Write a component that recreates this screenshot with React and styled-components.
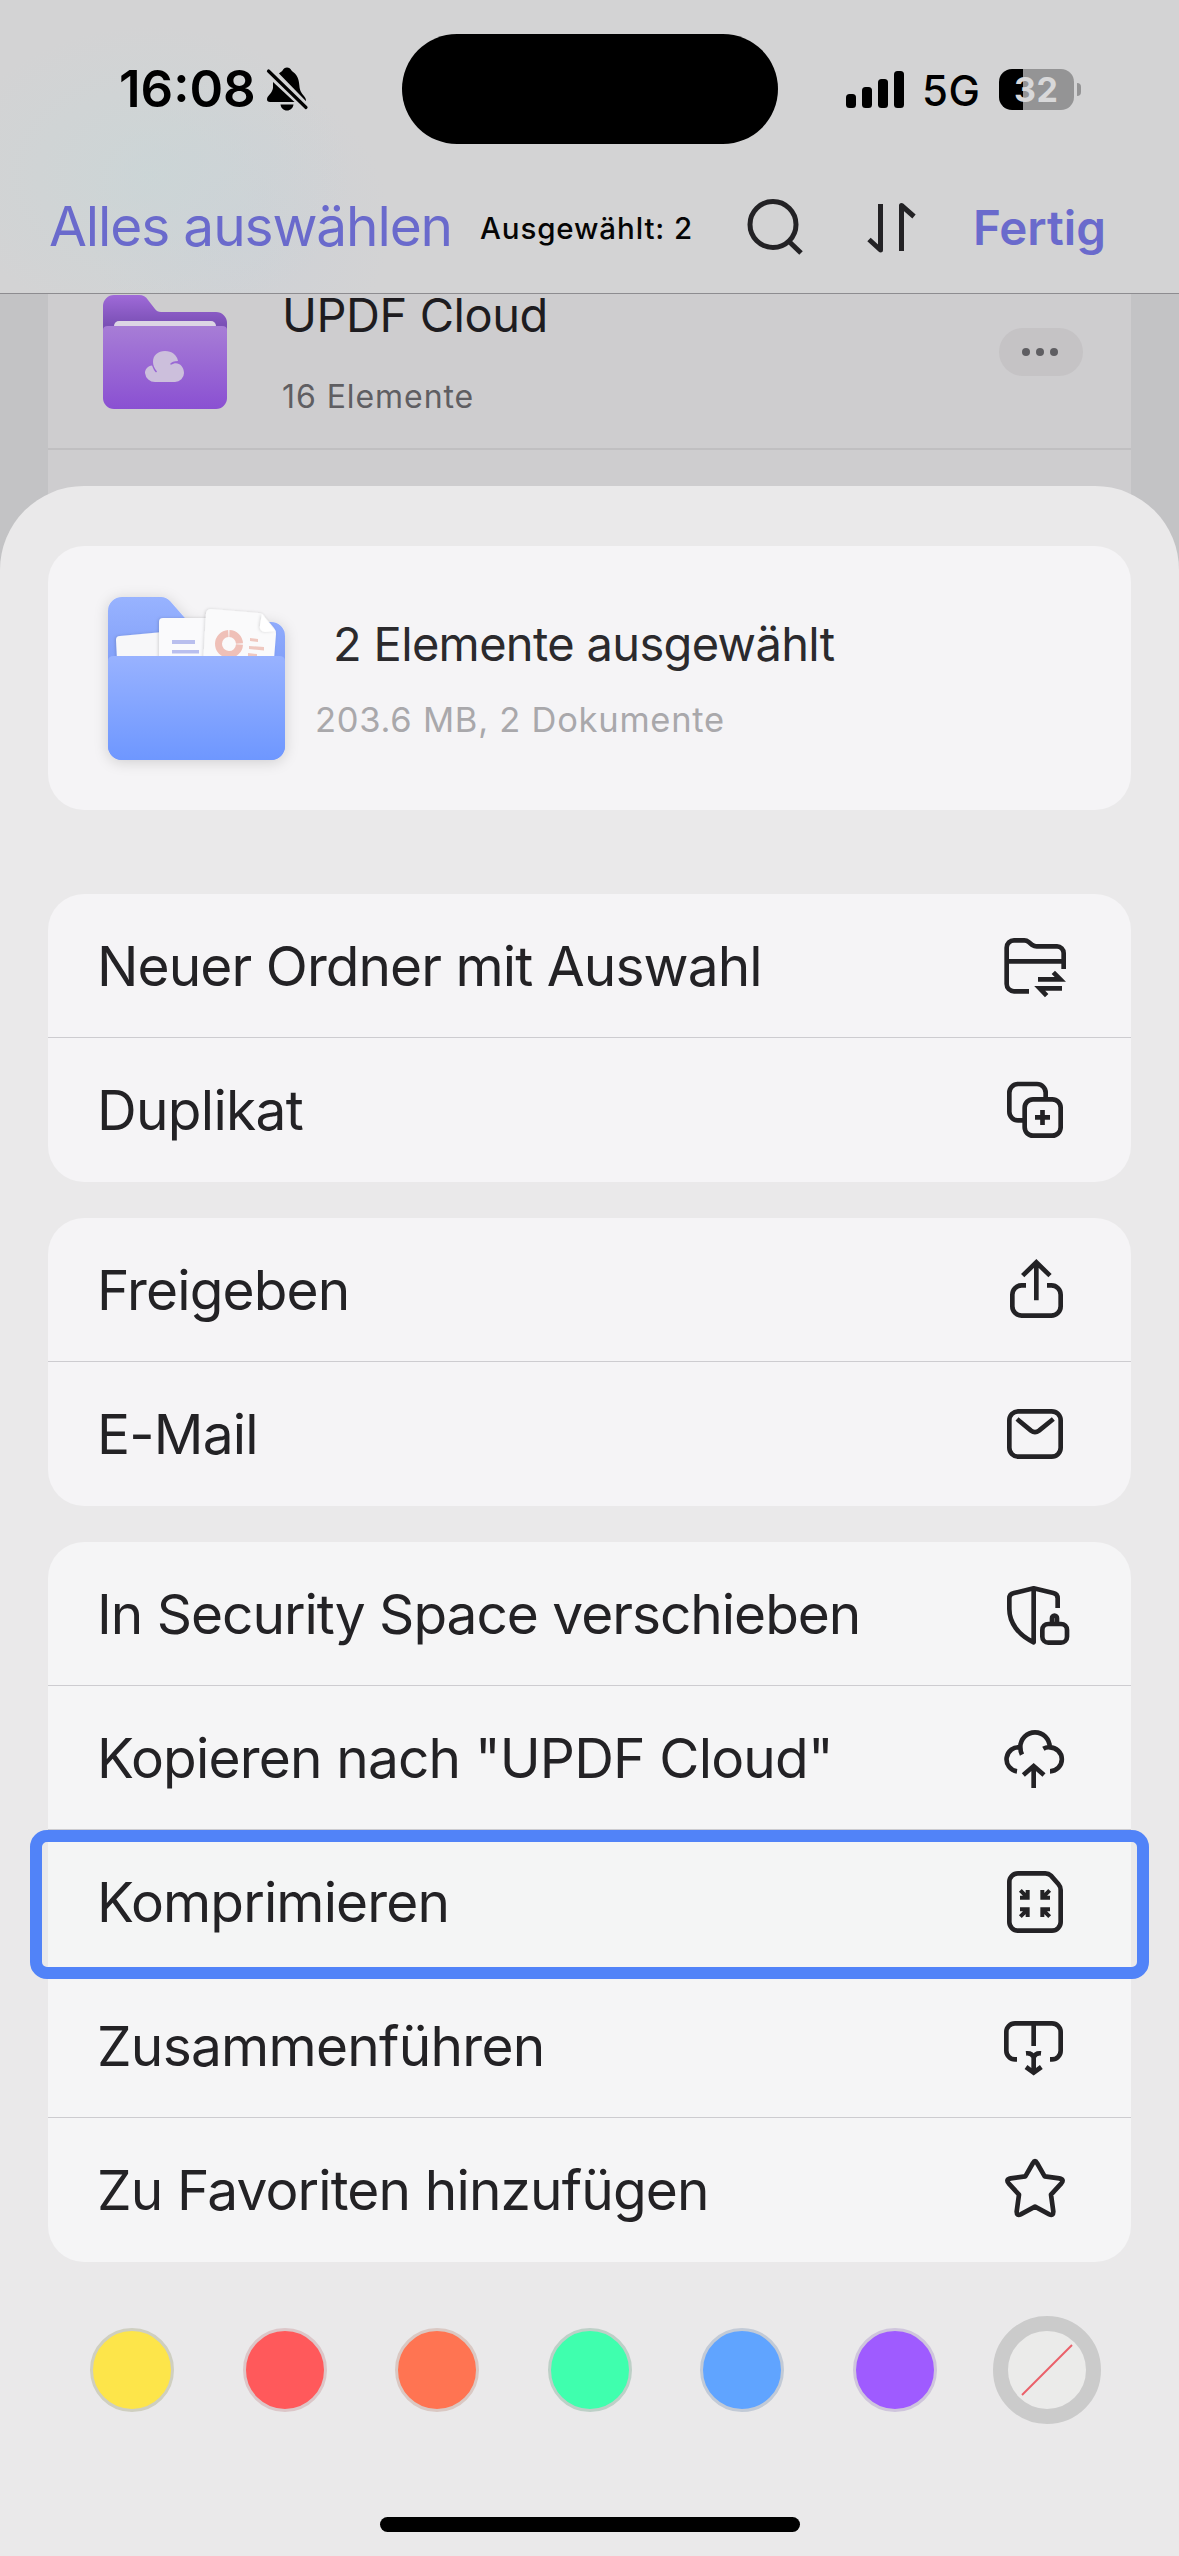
import React from "react";
import styled, { createGlobalStyle } from "styled-components";

const GlobalStyle = createGlobalStyle`
  * { box-sizing: border-box; }
  body { margin: 0; background: #c3c2c4; }
`;

const Screen = styled.div`
  width: 1179px;
  height: 2556px;
  display: flex;
  flex-direction: column;
  overflow: hidden;
  background: #c3c3c5;
  font-family: Inter, "Liberation Sans", sans-serif;
  color: #232225;
`;

const TopBar = styled.header`
  flex: none;
  height: 294px;
  border-bottom: 1px solid #8d8c90;
  background:
    radial-gradient(ellipse 200px 150px at 150px 175px, rgba(202, 214, 215, 0.75), rgba(202, 214, 215, 0)),
    radial-gradient(ellipse 150px 150px at 240px 225px, rgba(203, 208, 216, 0.6), rgba(203, 208, 216, 0)),
    #d3d3d4;
`;

const StatusBar = styled.div`
  height: 178px;
  display: grid;
  grid-template-columns: 402px 376px 401px;
  align-items: center;
  color: #000;
`;

const Clock = styled.div`
  display: flex;
  align-items: center;
  gap: 10px;
  padding-left: 119px;
  font-size: 51px;
  font-weight: 600;
  line-height: 60px;
`;

const Island = styled.div`
  height: 110px;
  border-radius: 55px;
  background: #000;
`;

const Indicators = styled.div`
  display: flex;
  align-items: center;
  padding-left: 68px;
`;

const SignalBars = styled.div`
  display: flex;
  align-items: flex-end;
  gap: 6px;
  height: 37px;
  margin-right: 18px;
`;

const SignalBar = styled.span`
  width: 10px;
  height: ${(p) => p.$height}px;
  border-radius: 3.5px;
  background: #000;
`;

const NetworkType = styled.span`
  width: 77px;
  padding-top: 3px;
  font-size: 42px;
  font-weight: 500;
  line-height: 50px;
  letter-spacing: 0.6px;
`;

const Battery = styled.div`
  display: flex;
  align-items: center;
  gap: 3px;
`;

const BatteryBody = styled.div`
  width: 75px;
  height: 41px;
  border-radius: 13px;
  background: linear-gradient(90deg, #000 24px, #949495 24px);
  color: #d8d8d9;
  font-size: 34px;
  font-weight: 700;
  line-height: 42px;
  letter-spacing: 0.6px;
  padding-left: 15px;
`;

const BatteryTip = styled.span`
  width: 4px;
  height: 13px;
  border-radius: 0 6px 6px 0;
  background: #949495;
`;

const NavBar = styled.nav`
  height: 115px;
  padding: 0 73px 20px 49px;
  display: flex;
  align-items: center;
`;

const NavLink = styled.span`
  color: #6a6acc;
  font-size: ${(p) => (p.$strong ? 47.5 : 55)}px;
  font-weight: ${(p) => (p.$strong ? 600 : 400)};
  letter-spacing: ${(p) => (p.$strong ? 0 : -1.13)}px;
  padding-top: ${(p) => (p.$strong ? 4 : 0)}px;
  line-height: 64px;
  white-space: nowrap;
`;

const SelectionCount = styled.span`
  margin-left: 28px;
  padding-top: 4px;
  color: #050505;
  font-size: 29.5px;
  font-weight: 500;
  line-height: 36px;
  letter-spacing: 0.89px;
  white-space: nowrap;
`;

const NavTools = styled.div`
  display: flex;
  gap: 52px;
  margin: 4px auto 0;
  padding-left: 4px;
`;

const Library = styled.main`
  flex: none;
  height: 280px;
  padding: 0 48px;
  overflow: hidden;
`;

const LibraryList = styled.div`
  height: 100%;
  background: #cecdcf;
`;

const LibraryRow = styled.div`
  height: 195px;
  margin-top: -39px;
  padding: 0 48px 0 55px;
  display: flex;
  align-items: center;
  border-bottom: 2px solid #c0bfc1;
`;

const LibraryItem = styled.div`
  flex: 1;
  padding: 16px 0 0 55px;
`;

const ItemName = styled.div`
  color: #1e1c20;
  font-size: 47px;
  line-height: 40px;
  letter-spacing: -0.45px;
`;

const ItemMeta = styled.div`
  margin-top: 34px;
  color: #5f5e62;
  font-size: 32px;
  line-height: 56px;
  letter-spacing: 0.93px;
`;

const MoreButton = styled.div`
  width: 84px;
  height: 48px;
  border-radius: 24px;
  display: flex;
  align-items: center;
  justify-content: center;
  gap: 6px;
  padding-right: 2px;
  background: #c5c3c5;
`;

const Dot = styled.span`
  width: 8px;
  height: 8px;
  border-radius: 50%;
  background: #5f5e62;
`;

const Sheet = styled.section`
  position: relative;
  flex: 1;
  margin-top: -88px;
  padding: 60px 48px 24px;
  display: flex;
  flex-direction: column;
  border-radius: 84px 84px 0 0;
  background: #eae9ea;
`;

const SummaryCard = styled.div`
  height: 264px;
  padding: 0 60px;
  display: flex;
  align-items: center;
  border-radius: 36px;
  background: #f5f4f6;
`;

const SummaryText = styled.div`
  padding: 6px 0 0 30px;
`;

const SummaryTitle = styled.div`
  padding-left: 18px;
  color: #2b2a2d;
  font-size: 47px;
  line-height: 60px;
  letter-spacing: -0.66px;
`;

const SummaryMeta = styled.div`
  margin-top: 18px;
  color: #a9a8ab;
  font-size: 34.5px;
  line-height: 56px;
  letter-spacing: 0.74px;
`;

const Groups = styled.div`
  margin-top: 84px;
  display: flex;
  flex-direction: column;
  gap: 36px;
`;

const Group = styled.div`
  border-radius: 36px;
  background: ${(p) => (p.$plain ? "#f5f5f6" : "#f5f4f6")};
`;

const Row = styled.div`
  position: relative;
  height: 144px;
  padding: 0 66px 0 49px;
  display: flex;
  align-items: center;
  justify-content: space-between;
  background: ${(p) => (p.$highlighted ? "#f4f5f5" : "transparent")};

  &:not(:last-child) {
    border-bottom: 1px solid #cdccd0;
  }

  ${(p) =>
    p.$highlighted &&
    `&::after {
      content: "";
      position: absolute;
      z-index: 1;
      inset: 0 -18px -6px -18px;
      border: 12px solid #5183f8;
      border-radius: 17px;
    }`}
`;

const RowLabel = styled.span`
  font-size: 55px;
  line-height: 66px;
  letter-spacing: ${(p) => p.$tracking}px;
  white-space: nowrap;
`;

const Glyph = styled.svg`
  display: block;
  flex: none;
  width: ${(p) => p.$width || 60}px;
  height: ${(p) => p.$height || 60}px;
  overflow: visible;
  fill: none;
  stroke: #232225;
  stroke-width: ${(p) => p.$stroke || 14};
`;

const Picture = styled.svg`
  display: block;
  flex: none;
  overflow: visible;
`;

const Swatches = styled.div`
  margin-top: 54px;
  padding: 0 30px;
  display: flex;
  justify-content: space-between;
`;

const SwatchCell = styled.div`
  width: 108px;
  height: 108px;
  display: flex;
  align-items: center;
  justify-content: center;
`;

const Swatch = styled.span`
  width: 84px;
  height: 84px;
  border-radius: 50%;
  border: 3px solid ${(p) => p.$rim};
  background: ${(p) => p.$color};
`;

const NoColor = styled.span`
  width: 108px;
  height: 108px;
  border-radius: 50%;
  border: 15px solid #cbcbcb;
  background: #ebebea;
  display: flex;
  align-items: center;
  justify-content: center;
`;

const HomeBar = styled.div`
  width: 420px;
  height: 15px;
  margin: auto auto 0;
  border-radius: 8px;
  background: #000;
`;

const ICONS = {
  newFolder: (
    <path d="M72 166H27A22 22 0 0 1 5 144V35A22 22 0 0 1 27 13H58Q65 13 71 18L82 27Q88 31 95 31H156A20 20 0 0 1 176 51V99M5 76H176M99 130H166L145 109M171 157H104L125 179" />
  ),
  duplicate: (
    <>
      <path d="M122 54V38A26 26 0 0 0 96 12H39A26 26 0 0 0 13 38V95A26 26 0 0 0 39 121H56" />
      <rect x="59" y="58" width="108" height="109" rx="25" />
      <path d="M90 112H135M112.5 90V135" />
    </>
  ),
  share: (
    <path d="M63 76H50A28 28 0 0 0 22 104V139A28 28 0 0 0 50 167H139A28 28 0 0 0 167 139V104A28 28 0 0 0 139 76H126M94 8V121M53 47L94 7L135 47" />
  ),
  mail: (
    <>
      <rect x="13" y="22" width="154" height="136" rx="27" />
      <path d="M36 45L78 80Q90 89 102 80L145 45" />
    </>
  ),
  security: (
    <>
      <path
        strokeLinejoin="round"
        d="M158 72V43Q158 30 145 27L86 13L27 27Q13 30 13 43V75C13 116 40 153 86 175V13"
      />
      <rect x="112" y="120" width="74" height="56" rx="18" />
      <path d="M141 120V103A7.5 8 0 0 1 156 103V120" />
    </>
  ),
  cloudUpload: (
    <path d="M36 130A36 36 0 0 1 46 58M51 80Q46 70 46 57A44 44 0 0 1 134 57M115 62Q124 57 134 58A36 36 0 0 1 135 130M86 180V113M55 141L86 114L117 141" />
  ),
  compress: (
    <>
      <path d="M39 4H121Q131 4 138 11L160 36Q167 44 167 54V150A26 26 0 0 1 141 176H39A26 26 0 0 1 13 150V30A26 26 0 0 1 39 4Z" />
      <path
        strokeWidth="12"
        d="M45 77H68V54M46 55L67 76M135 77H112V54M134 55L113 76M45 112H68V135M46 134L67 113M135 112H112V135M134 134L113 113"
      />
    </>
  ),
  merge: (
    <path d="M36 130H30A26 26 0 0 1 4 104V48A26 26 0 0 1 30 22H141A26 26 0 0 1 167 48V104A26 26 0 0 1 141 130H135M86 22V90M63 112Q81 110 86 124Q91 110 108 112M86 120V168M63 153L86 170L109 153" />
  ),
  star: (
    <path
      strokeLinejoin="round"
      d="M84 9Q90 -3 96 9L119 49L163 55Q179 58 169 70L138 104L145 155Q145 168 133 163L90 140L47 163Q35 168 35 155L42 104L11 70Q1 58 17 55L61 49Z"
    />
  ),
};

const MENU = [
  [
    { label: "Neuer Ordner mit Auswahl", icon: "newFolder", tracking: -0.92 },
    { label: "Duplikat", icon: "duplicate", tracking: -0.7 },
  ],
  [
    { label: "Freigeben", icon: "share", tracking: -0.85 },
    { label: "E-Mail", icon: "mail", tracking: -0.8 },
  ],
  [
    { label: "In Security Space verschieben", icon: "security", tracking: -1.02 },
    { label: 'Kopieren nach "UPDF Cloud"', icon: "cloudUpload", tracking: -0.82 },
    { label: "Komprimieren", icon: "compress", tracking: -0.86, highlighted: true },
    { label: "Zusammenführen", icon: "merge", tracking: -0.73 },
    { label: "Zu Favoriten hinzufügen", icon: "star", tracking: -0.86 },
  ],
];

const COLORS = [
  { color: "#fde54a", rim: "#cfcfc0" },
  { color: "#ff595b", rim: "#dcc6c8" },
  { color: "#ff7452", rim: "#dac8c3" },
  { color: "#3fffae", rim: "#bdd0c7" },
  { color: "#60a4ff", rim: "#c2cad6" },
  { color: "#9f5bff", rim: "#cfc5dc" },
];

function MutedBell() {
  return (
    <Picture width="42" height="44" viewBox="0 0 42 44">
      <path
        fill="#000"
        d="M13 6.5C14.5 5 16 4.5 16.5 3.5C17.5 1.5 19 .5 21 .5S24.5 1.500 25.5 3.5C26 4.5 28.5 5.5 30.5 8.5C33.5 13 33 18 34 22.5C35 27 40 29.5 40 33.5L39.8 34ZM7 15L28.5 35H4C2 35 1 34 1 32.5C1 28.5 6 27 7 21ZM14.5 37.5H27.5C27 41 24.5 43.5 21 43.5S15 41 14.5 37.5Z"
      />
      <path d="M2.5 4L40 40.5" stroke="#000" strokeWidth="3.2" strokeLinecap="round" />
    </Picture>
  );
}

function CloudFolder() {
  return (
    <Picture width="124" height="116" viewBox="0 0 124 116">
      <defs>
        <linearGradient id="cloudBack" x1="0" y1="0" x2="0" y2="1">
          <stop offset="0" stopColor="#9f6ad8" />
          <stop offset="0.5" stopColor="#7b50b6" />
        </linearGradient>
        <linearGradient id="cloudFront" x1="0" y1="0" x2="0" y2="1">
          <stop offset="0" stopColor="#a77dd6" />
          <stop offset="1" stopColor="#8a50d2" />
        </linearGradient>
      </defs>
      <path
        fill="url(#cloudBack)"
        d="M0 12A11 11 0 0 1 11 1H36Q42 1 45 6L52 15Q54 18 58 18H113A11 11 0 0 1 124 29V60H0Z"
      />
      <path fill="#dcd5e4" d="M11 40V32A5 5 0 0 1 16 27H108A5 5 0 0 1 113 32V40Z" />
      <path
        fill="url(#cloudFront)"
        d="M0 36Q0 32 5 32H119Q124 32 124 36V104A11 11 0 0 1 113 115H11A11 11 0 0 1 0 104Z"
      />
      <path
        fill="#ccbfdc"
        d="M52 88A10 10 0 0 1 42 79C42 75 45 72 49 71.500C50 74 51 76.500 53 78.500L54 77.500C51 74 50 71 50 68C50 61 55 57 62 57C69 57 74 61 75 67C71 67 68.500 68 67 70L68 70.800C74 66.500 81 71 81 79A9 9 0 0 1 72 88Z"
      />
    </Picture>
  );
}

function DocumentFolder() {
  return (
    <Picture width="177" height="163" viewBox="0 0 177 163">
      <defs>
        <linearGradient id="docBack" x1="0" y1="0" x2="0" y2="1">
          <stop offset="0" stopColor="#98b3ff" />
          <stop offset="0.6" stopColor="#7796f6" />
        </linearGradient>
        <linearGradient id="docFront" x1="0" y1="0" x2="0" y2="1">
          <stop offset="0" stopColor="#98b2ff" />
          <stop offset="1" stopColor="#6e97ff" />
        </linearGradient>
        <filter id="folderShadow" x="-20%" y="-20%" width="140%" height="150%">
          <feDropShadow dx="0" dy="2" stdDeviation="7" floodColor="#000" floodOpacity="0.16" />
        </filter>
        <filter id="paperShadow" x="-20%" y="-20%" width="140%" height="140%">
          <feDropShadow dx="-1" dy="0" stdDeviation="1.5" floodColor="#000" floodOpacity="0.14" />
        </filter>
        <clipPath id="papersArea">
          <rect x="0" y="0" width="177" height="62" />
        </clipPath>
      </defs>
      <path
        filter="url(#folderShadow)"
        fill="url(#docBack)"
        d="M0 14A14 14 0 0 1 14 0H53Q58 0 62 4L76 20Q80 25 86 25H163A14 14 0 0 1 177 39V149A14 14 0 0 1 163 163H14A14 14 0 0 1 0 149Z"
      />
      <g clipPath="url(#papersArea)">
        <path filter="url(#paperShadow)" fill="#f7f7f9" d="M8 43Q8 39 12 39L55 35V80H10Z" />
        <path filter="url(#paperShadow)" fill="#fafafc" d="M51 25Q51 21 55 21H102V80H51Z" />
        <path fill="#b9bfee" d="M64 43H87V47H64ZM64 53H91V56.5H64Z" />
        <path
          filter="url(#paperShadow)"
          fill="#fafafb"
          d="M98 16Q99 12 103 12L151 16Q155 16 157 20L166 31Q168 33 168 37L165 75L95 70Z"
        />
        <path filter="url(#paperShadow)" fill="#fff" d="M154 17L167 34L157 35Q151 34 152 28Z" />
        <circle
          cx="121"
          cy="47"
          r="10.5"
          fill="none"
          stroke="#efc0b8"
          strokeWidth="7"
          strokeDasharray="15.5 1 48 1.5"
          transform="rotate(-88 121 47)"
        />
        <path fill="#efc8c0" d="M142 41L150 42V45L142 44ZM141 49L156 50V53.5L141 52ZM140 56L149 57V60L140 59Z" />
      </g>
      <path
        fill="url(#docFront)"
        d="M0 64Q0 59 6 59H171Q177 59 177 64V149A14 14 0 0 1 163 163H14A14 14 0 0 1 0 149Z"
      />
    </Picture>
  );
}

function Header() {
  return (
    <TopBar>
      <StatusBar>
        <Clock>
          16:08
          <MutedBell />
        </Clock>
        <Island />
        <Indicators>
          <SignalBars>
            {[14, 21, 29, 37].map((h) => (
              <SignalBar key={h} $height={h} />
            ))}
          </SignalBars>
          <NetworkType>5G</NetworkType>
          <Battery>
            <BatteryBody>32</BatteryBody>
            <BatteryTip />
          </Battery>
        </Indicators>
      </StatusBar>
      <NavBar>
        <NavLink>Alles auswählen</NavLink>
        <SelectionCount>Ausgewählt: 2</SelectionCount>
        <NavTools>
          <Glyph viewBox="0 0 66 66" $width={66} $height={66} $stroke={5}>
            <circle cx="30" cy="29.5" r="23" />
            <path d="M45.5 46L58 58" />
          </Glyph>
          <Glyph viewBox="0 0 66 66" $width={66} $height={66} $stroke={5}>
            <path strokeLinejoin="round" d="M19.5 9V55L8 44.500M40.5 56V10.500L53 21.500" />
          </Glyph>
        </NavTools>
        <NavLink $strong>Fertig</NavLink>
      </NavBar>
    </TopBar>
  );
}

export default function App() {
  return (
    <Screen>
      <GlobalStyle />
      <Header />
      <Library>
        <LibraryList>
          <LibraryRow>
            <CloudFolder />
            <LibraryItem>
              <ItemName>UPDF Cloud</ItemName>
              <ItemMeta>16 Elemente</ItemMeta>
            </LibraryItem>
            <MoreButton>
              <Dot />
              <Dot />
              <Dot />
            </MoreButton>
          </LibraryRow>
        </LibraryList>
      </Library>
      <Sheet>
        <SummaryCard>
          <DocumentFolder />
          <SummaryText>
            <SummaryTitle>2 Elemente ausgewählt</SummaryTitle>
            <SummaryMeta>203.6 MB, 2 Dokumente</SummaryMeta>
          </SummaryText>
        </SummaryCard>
        <Groups>
          {MENU.map((rows, i) => (
            <Group key={i} $plain={i === 2}>
              {rows.map((row) => (
                <Row key={row.label} $highlighted={row.highlighted}>
                  <RowLabel $tracking={row.tracking}>{row.label}</RowLabel>
                  <Glyph viewBox="0 0 180 180">{ICONS[row.icon]}</Glyph>
                </Row>
              ))}
            </Group>
          ))}
        </Groups>
        <Swatches>
          {COLORS.map((c) => (
            <SwatchCell key={c.color}>
              <Swatch $color={c.color} $rim={c.rim} />
            </SwatchCell>
          ))}
          <SwatchCell>
            <NoColor>
              <Glyph viewBox="0 0 60 60" $stroke={2}>
                <path d="M5 55L55 5" stroke="#ea6069" />
              </Glyph>
            </NoColor>
          </SwatchCell>
        </Swatches>
        <HomeBar />
      </Sheet>
    </Screen>
  );
}
